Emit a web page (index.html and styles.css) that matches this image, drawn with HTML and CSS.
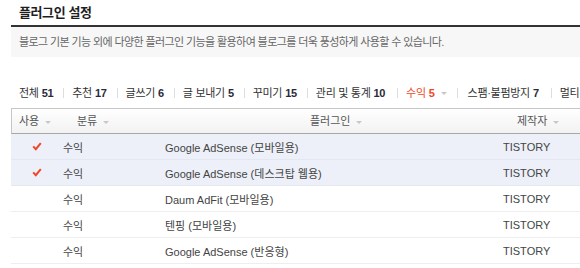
FILE: index.html
```html
<!DOCTYPE html>
<html lang="ko">
  <head>
    <meta charset="utf-8">
    <title>플러그인 설정</title>
    <link rel="stylesheet" href="styles.css">
  </head>
  <body>

    <div id="wrap">
        <h2 class="tit">플러그인 설정</h2>
        <p class="desc">블로그 기본 기능 외에 다양한 플러그인 기능을 활용하여 블로그를 더욱 풍성하게 사용할 수 있습니다.</p>

        <ul class="tabs">
            <li>전체 <em>51</em></li>
            <li>추천 <em>17</em></li>
            <li>글쓰기 <em>6</em></li>
            <li>글 보내기 <em>5</em></li>
            <li>꾸미기 <em>15</em></li>
            <li>관리 및 통계 <em>10</em></li>
            <li class="on">수익 <em>5</em><i class="arr"></i></li>
            <li>스팸·불펌방지 <em>7</em></li>
            <li>멀티미디어 <em>3</em></li>
        </ul>

        <div class="list">
            <div class="listHead">
                <span class="c1">사용<i class="arr"></i></span>
                <span class="c2">분류<i class="arr"></i></span>
                <span class="c3">플러그인<i class="arr"></i></span>
                <span class="c4">제작자<i class="arr"></i></span>
            </div>
            <ul class="listBody">
                <li class="row on">
                    <span class="c1"><svg class="chk" width="10" height="9" viewBox="0 0 10 9"><polyline points="1.2,4.4 3.8,7.2 8.8,1.2" fill="none" stroke="#f0452a" stroke-width="2"/></svg></span>
                    <span class="c2">수익</span>
                    <span class="c3">Google AdSense (모바일용)</span>
                    <span class="c4">TISTORY</span>
                </li>
                <li class="row on">
                    <span class="c1"><svg class="chk" width="10" height="9" viewBox="0 0 10 9"><polyline points="1.2,4.4 3.8,7.2 8.8,1.2" fill="none" stroke="#f0452a" stroke-width="2"/></svg></span>
                    <span class="c2">수익</span>
                    <span class="c3">Google AdSense (데스크탑 웹용)</span>
                    <span class="c4">TISTORY</span>
                </li>
                <li class="row">
                    <span class="c1"></span>
                    <span class="c2">수익</span>
                    <span class="c3">Daum AdFit (모바일용)</span>
                    <span class="c4">TISTORY</span>
                </li>
                <li class="row">
                    <span class="c1"></span>
                    <span class="c2">수익</span>
                    <span class="c3">텐핑 (모바일용)</span>
                    <span class="c4">TISTORY</span>
                </li>
                <li class="row">
                    <span class="c1"></span>
                    <span class="c2">수익</span>
                    <span class="c3">Google AdSense (반응형)</span>
                    <span class="c4">TISTORY</span>
                </li>
            </ul>
        </div>
    </div>

  </body>
</html>
```

FILE: styles.css
```css
* {
    margin:0;
    padding:0;
    box-sizing:border-box;
}

body {color:#333;font-size:11px;font-family:"Liberation Sans","Noto Sans CJK KR",sans-serif;overflow:hidden;}
ul, li {list-style:none;}
em {font-style:normal;}
#wrap {width:640px;padding-left:11px;}

/* title */
.tit {height:25px;padding-left:8px;line-height:25px;font-size:13px;letter-spacing:-0.4px;color:#1e1e1e;}
.desc {height:32px;padding-left:8px;border-top:2px solid #333;background-color:#f7f7f7;line-height:30px;color:#666;letter-spacing:-0.6px;}

/* tabs */
.tabs {display:flex;align-items:center;height:16px;margin:28px 0 7px;padding-left:8px;line-height:16px;white-space:nowrap;letter-spacing:-0.3px;}
.tabs li {display:flex;align-items:center;}
.tabs li + li:before {content:"";display:inline-block;width:1px;height:10px;margin:0 8px 0 10px;background-color:#ddd;}
.tabs em {margin-left:3px;font-weight:bold;color:#2a2a3a;}
.tabs .on {padding-left:2px;}
.tabs .on, .tabs .on em {color:#f0461e;}
.tabs .on + li:before {margin-right:10px;}
.tabs li:last-child:before {margin-left:12px;}
.arr {display:inline-block;width:0;height:0;margin-left:6px;border-left:3px solid transparent;border-right:3px solid transparent;border-top:3px solid #c8c8c8;vertical-align:middle;}

/* list */
.listHead {display:flex;height:26px;border:1px solid #c6c6c6;border-right:0;border-bottom-color:#a8a8a8;background:linear-gradient(#fff,#f2f2f2);line-height:24px;color:#555;}
.listHead span {padding-left:7px;}
.listHead .c1 {width:58px;}
.listHead .c2 {width:233px;}
.listHead .c3 {width:207px;}

.row {display:flex;align-items:center;height:26px;border-bottom:1px solid #eee;color:#444;}
.row.on {background-color:#edf0f8;border-bottom-color:#e3e7f1;}
.row .c1 {display:flex;justify-content:center;width:52px;}
.row .c2 {width:102px;}
.row .c3 {width:338px;}
.chk {display:block;}
```
